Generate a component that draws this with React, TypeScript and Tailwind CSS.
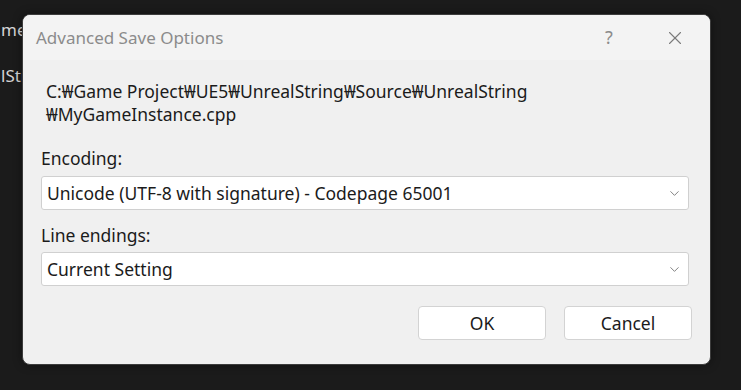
import { ChevronDown, X } from 'lucide-react';

const font = { fontFamily: '"Noto Sans", "Noto Sans CJK KR", sans-serif' };

interface ComboProps {
  value: string;
}

const Combo = ({ value }: ComboProps) => (
  <div className="h-[34px] flex items-center justify-between pl-[5px] pr-[6px] bg-white border border-[#d0d0d0] rounded-[3px] text-[17.5px] text-[#1b1b1b]">
    <span>{value}</span>
    <ChevronDown size={15} strokeWidth={1.4} className="text-[#707070]" />
  </div>
);

const DialogButton = ({ label }: { label: string }) => (
  <button className="w-[128px] h-[34px] bg-white border border-[#d3d3d3] rounded-[4px] text-[17.5px] text-[#1b1b1b]">
    {label}
  </button>
);

export default function App() {
  return (
    <div className="relative w-[741px] h-[390px] overflow-hidden bg-[#1b1b1b]" style={font}>
      {/* editor text behind the dialog */}
      <div className="flex flex-col gap-[22px] pt-[18px] pl-[1px] text-[17px] text-[#d4d4d4] leading-[24px]">
        <span>me</span>
        <span>lString</span>
      </div>

      <div className="absolute left-[22px] top-[14px] w-[689px] h-[351px] flex flex-col border border-[#3c3c3c] rounded-[8px] overflow-hidden bg-[#f0f0f0] shadow-[0_0_10px_rgba(0,0,0,0.4)]">
        <div className="h-[45px] flex items-center bg-[#f3f3f3] pl-[13px]">
          <span className="flex-1 text-[17px] text-[#8b8b8b]">Advanced Save Options</span>
          <span className="w-[30px] text-center text-[18px] text-[#8b8b8b] mr-[40px]">?</span>
          <X size={22} strokeWidth={1.2} className="text-[#7a7a7a] mr-[24px]" />
        </div>

        <div className="flex flex-col px-[18px] pt-[20px]">
          <div className="pl-[5px] text-[17.5px] leading-[23px] text-[#1b1b1b]">
            <div>C:₩Game Project₩UE5₩UnrealString₩Source₩UnrealString</div>
            <div>₩MyGameInstance.cpp</div>
          </div>

          <div className="mt-[21px] text-[17.5px] leading-[23px] text-[#1b1b1b]">Encoding:</div>
          <div className="mt-[6px] mr-[3px]">
            <Combo value="Unicode (UTF-8 with signature) - Codepage 65001" />
          </div>

          <div className="mt-[14px] text-[17.5px] leading-[23px] text-[#1b1b1b]">Line endings:</div>
          <div className="mt-[5px] mr-[3px]">
            <Combo value="Current Setting" />
          </div>

          <div className="mt-[20px] flex justify-end gap-[18px]">
            <DialogButton label="OK" />
            <DialogButton label="Cancel" />
          </div>
        </div>
      </div>
    </div>
  );
}
